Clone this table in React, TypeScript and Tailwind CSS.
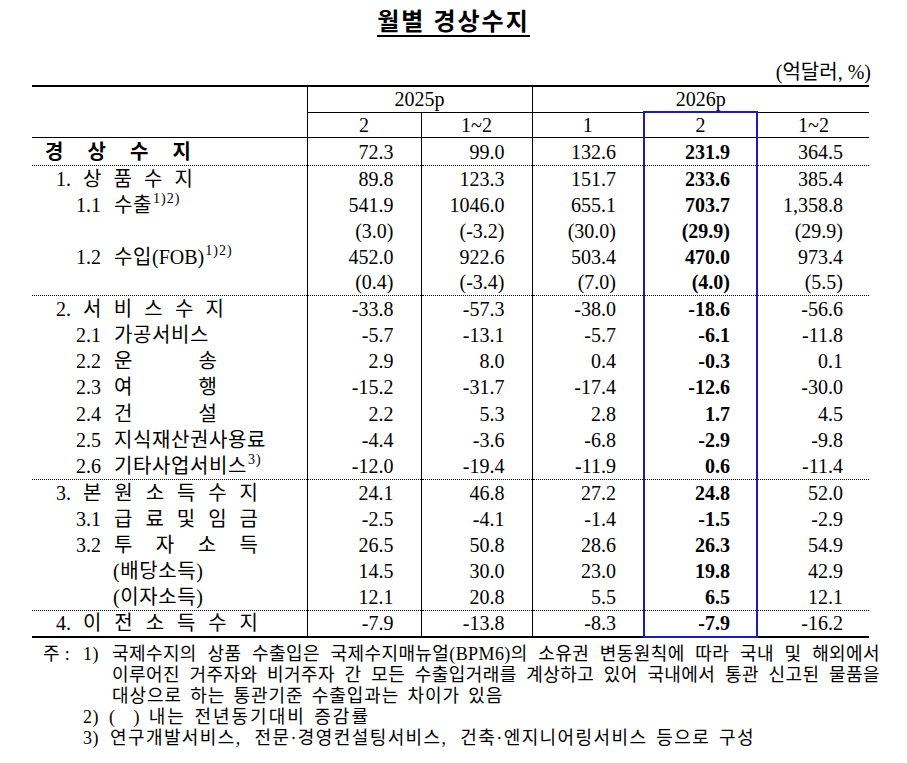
import type { ReactNode } from "react";

const BLUE = "border-[#1b1bb5]";

function Spread({ text, w }: { text: string; w: string }) {
  return (
    <span className={`inline-flex justify-between ${w}`}>
      {[...text].map((c, i) => (
        <span key={i}>{c}</span>
      ))}
    </span>
  );
}

function Sup({ children }: { children: ReactNode }) {
  return <span className="relative -top-[6px] ml-[1px] text-[14px] tracking-[1px]">{children}</span>;
}

const sec = (n: string, t: string, w: string) => (
  <div className="flex pl-[24px]">
    <span className="w-[27px]">{n}</span>
    <Spread text={t} w={w} />
  </div>
);

const sub = (n: string, content: ReactNode) => (
  <div className="flex items-center pl-[44px]">
    <span className="w-[38px]">{n}</span>
    {content}
  </div>
);

const plain = (t: string) => <span className="tracking-[0.6px]">{t}</span>;

type Row = {
  label: ReactNode;
  v: string[];
  h: string;
  end?: "dot" | "last";
};

const rows: Row[] = [
  {
    label: (
      <div className="pl-[13px] font-bold">
        <Spread text="경상수지" w="w-[146px]" />
      </div>
    ),
    v: ["72.3", "99.0", "132.6", "231.9", "364.5"],
    h: "h-[28px]",
    end: "dot",
  },
  { label: sec("1.", "상품수지", "w-[110px]"), v: ["89.8", "123.3", "151.7", "233.6", "385.4"], h: "h-[26px]" },
  {
    label: sub("1.1", <span className="flex items-center">{plain("수출")}<Sup>1)2)</Sup></span>),
    v: ["541.9", "1046.0", "655.1", "703.7", "1,358.8"],
    h: "h-[26px]",
  },
  { label: null, v: ["(3.0)", "(-3.2)", "(30.0)", "(29.9)", "(29.9)"], h: "h-[26px]" },
  {
    label: sub("1.2", <span className="flex items-center">{plain("수입")}(FOB)<Sup>1)2)</Sup></span>),
    v: ["452.0", "922.6", "503.4", "470.0", "973.4"],
    h: "h-[26px]",
  },
  { label: null, v: ["(0.4)", "(-3.4)", "(7.0)", "(4.0)", "(5.5)"], h: "h-[26px]", end: "dot" },
  { label: sec("2.", "서비스수지", "w-[141px]"), v: ["-33.8", "-57.3", "-38.0", "-18.6", "-56.6"], h: "h-[26px]" },
  { label: sub("2.1", plain("가공서비스")), v: ["-5.7", "-13.1", "-5.7", "-6.1", "-11.8"], h: "h-[26px]" },
  { label: sub("2.2", <Spread text="운송" w="w-[103px]" />), v: ["2.9", "8.0", "0.4", "-0.3", "0.1"], h: "h-[26px]" },
  { label: sub("2.3", <Spread text="여행" w="w-[103px]" />), v: ["-15.2", "-31.7", "-17.4", "-12.6", "-30.0"], h: "h-[27px]" },
  { label: sub("2.4", <Spread text="건설" w="w-[103px]" />), v: ["2.2", "5.3", "2.8", "1.7", "4.5"], h: "h-[26px]" },
  { label: sub("2.5", plain("지식재산권사용료")), v: ["-4.4", "-3.6", "-6.8", "-2.9", "-9.8"], h: "h-[27px]" },
  {
    label: sub("2.6", <span className="flex items-center">{plain("기타사업서비스")}<Sup>3)</Sup></span>),
    v: ["-12.0", "-19.4", "-11.9", "0.6", "-11.4"],
    h: "h-[26px]",
    end: "dot",
  },
  { label: sec("3.", "본원소득수지", "w-[175px]"), v: ["24.1", "46.8", "27.2", "24.8", "52.0"], h: "h-[26px]" },
  { label: sub("3.1", <Spread text="급료및임금" w="w-[144px]" />), v: ["-2.5", "-4.1", "-1.4", "-1.5", "-2.9"], h: "h-[26px]" },
  { label: sub("3.2", <Spread text="투자소득" w="w-[144px]" />), v: ["26.5", "50.8", "28.6", "26.3", "54.9"], h: "h-[26px]" },
  { label: <div className="pl-[81px] tracking-[0.6px]">(배당소득)</div>, v: ["14.5", "30.0", "23.0", "19.8", "42.9"], h: "h-[27px]" },
  {
    label: <div className="pl-[81px] tracking-[0.6px]">(이자소득)</div>,
    v: ["12.1", "20.8", "5.5", "6.5", "12.1"],
    h: "h-[26px]",
    end: "dot",
  },
  {
    label: sec("4.", "이전소득수지", "w-[175px]"),
    v: ["-7.9", "-13.8", "-8.3", "-7.9", "-16.2"],
    h: "h-[26px]",
    end: "last",
  },
];

export default function App() {
  return (
    <div className="w-[907px] h-[763px] bg-white text-black px-[32px] pt-[10px] font-['Liberation_Serif','Noto_Sans_CJK_KR',serif]">
      <div className="flex justify-center">
        <h1 className="text-[24px] leading-[25px] font-bold tracking-[2px] border-b-2 border-black">월별 경상수지</h1>
      </div>

      <div className="mt-[23px] pr-[4px] text-right text-[20px] leading-[24px]">(억달러, %)</div>

      <table className="mt-[1px] w-[837px] table-fixed border-collapse text-[20px] leading-[24px]">
        <colgroup>
          <col className="w-[275px]" />
          <col className="w-[114px]" />
          <col className="w-[111px]" />
          <col className="w-[112px]" />
          <col className="w-[113px]" />
          <col className="w-[112px]" />
        </colgroup>
        <thead>
          <tr className="h-[26px] border-t-2 border-black">
            <td rowSpan={2} className="border-r border-b border-black p-0" />
            <td colSpan={2} className="border-r border-b border-black p-0 text-center">
              2025p
            </td>
            <td colSpan={3} className="border-b border-black p-0 text-center">
              2026p
            </td>
          </tr>
          <tr className="h-[25px] border-b border-black">
            <td className="border-r border-black p-0 text-center">2</td>
            <td className="border-r border-black p-0 text-center">1~2</td>
            <td className="p-0 text-center">1</td>
            <td className={`border-x-2 border-t-2 ${BLUE} p-0 text-center`}>2</td>
            <td className="p-0 text-center">1~2</td>
          </tr>
        </thead>
        <tbody>
          {rows.map((r, i) => (
            <tr
              key={i}
              className={`${r.h} ${
                r.end === "dot" ? "border-b border-dotted border-black" : r.end === "last" ? "border-b-2 border-black" : ""
              }`}
            >
              <td className="border-r border-black p-0 align-middle whitespace-nowrap">{r.label}</td>
              <td className="border-r border-black p-0 pr-[27px] text-right">{r.v[0]}</td>
              <td className="border-r border-black p-0 pr-[27px] text-right">{r.v[1]}</td>
              <td className="p-0 pr-[27px] text-right">{r.v[2]}</td>
              <td
                className={`border-x-2 ${BLUE} p-0 pr-[26px] text-right font-bold ${
                  r.end === "last" ? "border-b-2" : ""
                }`}
              >
                {r.v[3]}
              </td>
              <td className="p-0 pr-[26px] text-right">{r.v[4]}</td>
            </tr>
          ))}
        </tbody>
      </table>

      <div className="mt-[6px] w-[848px] text-[18px] leading-[21px] tracking-[0.4px]">
        <div className="flex">
          <span className="w-[51px] shrink-0 pl-[11px]">주 :</span>
          <span className="w-[29px] shrink-0">1)</span>
          <div className="flex-1">
            <div className="text-justify [text-align-last:justify]">
              국제수지의 상품 수출입은 국제수지매뉴얼(BPM6)의 소유권 변동원칙에 따라 국내 및 해외에서
            </div>
            <div className="text-justify [text-align-last:justify]">
              이루어진 거주자와 비거주자 간 모든 수출입거래를 계상하고 있어 국내에서 통관 신고된 물품을
            </div>
            <div className="tracking-[0.9px] [word-spacing:3px]">대상으로 하는 통관기준 수출입과는 차이가 있음</div>
          </div>
        </div>
        <div className="flex pl-[51px]">
          <span className="w-[26px]">2)</span>
          <span>(</span>
          <span className="w-[18px]" />
          <span>)</span>
          <span className="ml-[9px] tracking-[2px] [word-spacing:2px]">내는 전년동기대비 증감률</span>
        </div>
        <div className="flex pl-[51px]">
          <span className="w-[27px]">3)</span>
          <span className="tracking-[1.4px] [word-spacing:3px]">
            연구개발서비스<span className="mr-[4px]">,</span> 전문·경영컨설팅서비스<span className="mr-[4px]">,</span> 건축·엔지니어링서비스 등으로 구성
          </span>
        </div>
      </div>
    </div>
  );
}
